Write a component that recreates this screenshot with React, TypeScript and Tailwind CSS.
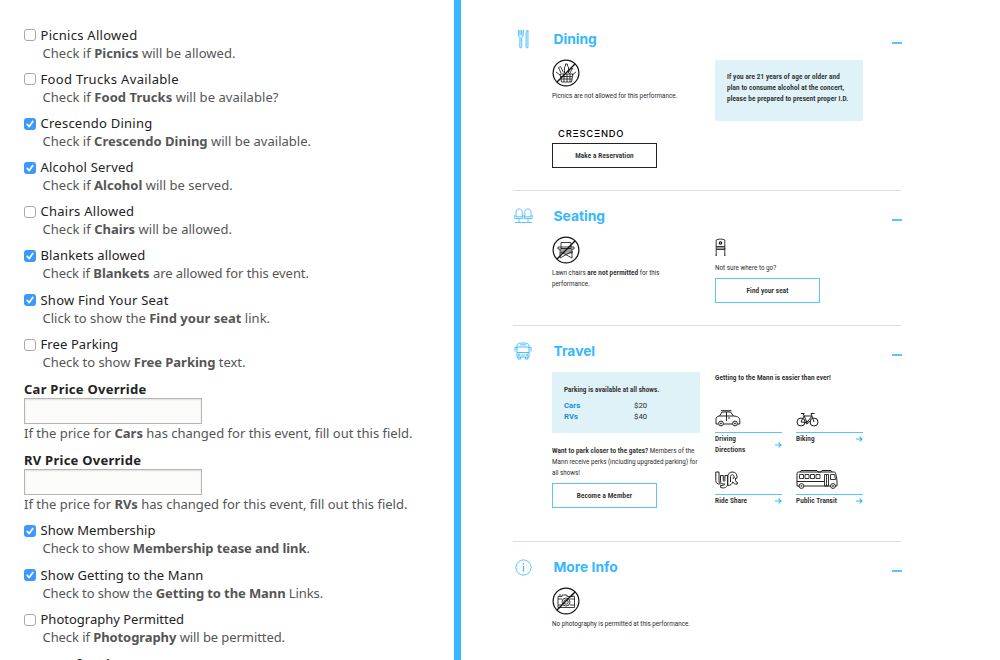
import React from "react";

type FieldProps = { checked?: boolean; label: string; tl: string; td: string; children: React.ReactNode };

function Check({ checked }: { checked?: boolean }) {
  return checked ? (
    <span className="flex h-3 w-3 shrink-0 items-center justify-center rounded-[3px] bg-[#3b99fc]">
      <svg viewBox="0 0 12 12" className="h-3 w-3" fill="none" stroke="#fff" strokeWidth="1.7" strokeLinecap="round" strokeLinejoin="round">
        <path d="M3.2 6.4 5.2 8.6 8.8 3.4" />
      </svg>
    </span>
  ) : (
    <span className="h-3 w-3 shrink-0 rounded-[3px] border border-[#a9a9a9] bg-white" />
  );
}

function Field({ checked, label, tl, td, children }: FieldProps) {
  return (
    <div className="h-[44.2px] shrink-0">
      <div className="flex h-[18px] items-center gap-[4.5px] text-[#222]">
        <Check checked={checked} />
        <span className={"whitespace-nowrap " + tl}>{label}</span>
      </div>
      <p className={"-mt-[0.8px] h-[18px] pl-[18.5px] leading-[18px] whitespace-nowrap text-[#555] " + td}>{children}</p>
    </div>
  );
}

function PriceField({ label, name }: { label: string; name: string }) {
  return (
    <div className="h-[71.2px] shrink-0">
      <div className="h-[18px] leading-[18px] font-bold tracking-[0.25px] text-[#222]">{label}</div>
      <div className="h-[26px] w-[178px] border border-[#b5b5b5] bg-[#fcfcfa] shadow-[inset_0_1px_2px_rgba(0,0,0,0.12)]" />
      <p className="h-[18px] leading-[18px] whitespace-nowrap text-[#555]">
        If the price for <b>{name}</b> has changed for this event, fill out this field.
      </p>
    </div>
  );
}

function Section({ icon, title, height, children }: { icon: React.ReactNode; title: string; height: string; children: React.ReactNode }) {
  return (
    <section className={"w-[388px] shrink-0 border-b border-[#dcdcdc] " + height}>
      <div className="flex h-[22px] items-center">
        <div className="flex w-[20px] items-center justify-center">{icon}</div>
        <h2 className="ml-[20.5px] flex-1 font-['Inter',sans-serif] text-[13.8px] leading-[22px] font-bold text-[#36b7ff]">{title}</h2>
        <span className="mt-[7px] mr-[-0.5px] h-[2px] w-[10px] bg-[#5cc3fb]" />
      </div>
      <div className="flex pl-[39px]">{children}</div>
    </section>
  );
}

function Arrow() {
  return (
    <svg viewBox="0 0 7 6" className="h-[6px] w-[7px]" fill="none" stroke="#36b7ff" strokeWidth="1.1">
      <path d="M0 3h6M3.6.6 6.1 3 3.6 5.4" />
    </svg>
  );
}

function LinkTile({ icon, children }: { icon: React.ReactNode; children: React.ReactNode }) {
  return (
    <div className="w-[67px]">
      <div className="flex h-[21px] items-end pb-[5px]">{icon}</div>
      <div className="flex items-center justify-between border-t border-[#5cc3fb] pt-[0.5px] font-bold tracking-[0.15px]">
        <span>{children}</span>
        <Arrow />
      </div>
    </div>
  );
}

function Banned({ children }: { children: React.ReactNode }) {
  return (
    <svg viewBox="0 0 28 28" className="h-[28px] w-[28px]" fill="none" stroke="#111" strokeWidth="0.8">
      {children}
      <circle cx="14" cy="14" r="12.9" strokeWidth="1.2" />
      <path d="M4.8 23.2 23.2 4.8" strokeWidth="1.3" />
    </svg>
  );
}

const diningIcon = (
  <svg viewBox="0 0 14 20" className="h-[20px] w-[14px]" fill="#d9f1ff" stroke="#36b7ff" strokeWidth="0.8">
    <path d="M2.4 1v5c0 1.6 1 2.2 1.6 2.6L3.7 18c0 1.2 2.2 1.2 2.2 0L5.6 8.6C6.4 8.200 7.300 7.600 7.300 6V1M4 1v5M5.700 1v5M10 11V5c0-2 .8-4 2-4v17c0 1.200-2 1.200-2 0z" />
  </svg>
);
const seatIcon = (
  <svg viewBox="0 0 19 16" className="h-[16px] w-[19px]" fill="none" stroke="#36b7ff" strokeWidth="0.8">
    <path d="M2 8.800V4.500C2 2 3 1 5.100 1s3.100 1 3.100 3.500v4.300zM10.800 8.800V4.500C10.800 2 11.800 1 13.900 1S17 2 17 4.500v4.300zM.8 7v3.500h8V7M10.200 7v3.500h8V7M5 10.500v4M14 10.500v4M1 14.500h17" />
  </svg>
);
const busIcon = (
  <svg viewBox="0 0 18 18" className="h-[18px] w-[18px]" fill="none" stroke="#36b7ff" strokeWidth="0.9">
    <path d="M3 15V3.500C3 2 5 1 9 1s6 1 6 2.500V15zM3 10.500h12M3 5h12M6 2.900h6M3 5.500H1v4M15 5.500h2v4M4 15v2h2.500v-2M11.500 15v2H14v-2M7 13h4" />
    <circle cx="5" cy="12.700" r=".8" /><circle cx="13" cy="12.700" r=".8" />
  </svg>
);
const infoIcon = (
  <svg viewBox="0 0 17 17" className="h-[17px] w-[17px]" fill="none" stroke="#36b7ff" strokeWidth="0.8">
    <circle cx="8.500" cy="8.500" r="7.600" />
    <path d="M8.500 7v5.500" strokeWidth="1.200" /><path d="M8.500 4.300v1.400" strokeWidth="1.300" />
  </svg>
);
const carIcon = (
  <svg viewBox="0 0 26 17" className="h-[17px] w-[26px]" fill="none" stroke="#222" strokeWidth="1">
    <path d="M3.500 14H1V9.500C1 7.500 2 6.200 4.500 6L7 2h8.500l3 4C23 6.200 24.800 8 24.800 10.500V14h-2.500M8.500 14h9M4.500 6h14M11.500 2v9M6 .7h10.500M13 8h2" />
    <circle cx="6" cy="13.500" r="2.400" /><circle cx="20" cy="13.500" r="2.400" />
    <circle cx="6" cy="13.500" r=".6" /><circle cx="20" cy="13.500" r=".6" />
  </svg>
);
const bikeIcon = (
  <svg viewBox="0 0 23 15" className="h-[15px] w-[23px]" fill="none" stroke="#222" strokeWidth="1">
    <circle cx="5" cy="10" r="4" /><circle cx="18" cy="10" r="4" />
    <path d="M5 10 8 4h8l-5 6.500zM11 10.500 7 1.500M5 1.500h3.500M18 10l-3-8.500h3.500M13 9.500l2 .5" /><circle cx="11" cy="10.500" r="1.300" />
  </svg>
);
const lyftIcon = (
  <svg viewBox="0 0 24 18" className="h-[18px] w-[24px]" fill="none" stroke="#222" strokeWidth="1" strokeLinejoin="round">
    <path d="M.8 1H4v9c0 1.600.6 2.200 1.400 2.800C2.600 13.600.8 12.200.8 9.500z" />
    <path d="M5.500 4.500h2.800v4.800c0 1.400 1.600 1.400 1.600 0V4.500h2.800V12c0 4-3 5.800-7 4.500v-2.400c2.200.8 3.700.4 4-1.300-2.500.8-4.200-.5-4.200-2.900z" />
    <path d="M12.700 14.500V6c0-3 1.700-5 4.600-5s4.700 2 4.700 4.800v1.400h-1.500v2.300c0 1 .5 1.500 1.700 1.500v2.200c-2.400 0-3.800-.6-4.500-2.400-.5 2.200-2 3.500-5 3.700M15.500 11V5.600c0-2.400 3.600-2.400 3.600 0v1.600h-1.500" />
  </svg>
);
const transitIcon = (
  <svg viewBox="0 0 42 20" className="h-[20px] w-[42px]" fill="none" stroke="#222" strokeWidth="1">
    <path d="M3 17H1V4.500C1 3.500 1.500 3 2.500 3H38c1 0 1.500.5 1.700 1.500L41 11v6h-2M8 17h27M4 3l1-1.500h16l1 1.500h3l1-1.500h9l1 1.500M1 12.500h27" />
    <path d="M3.500 5.500h4v4h-4zM9 5.500h4v4H9zM14.500 5.500h4v4h-4zM20 5.500h4v4h-4zM28.500 5.500h4V17h-4zM30.500 5.500V17M34.500 5.500h4l1 5h-5z" strokeWidth="0.9" />
    <circle cx="5.500" cy="17" r="2.400" fill="#fff" /><circle cx="37" cy="17" r="2.400" fill="#fff" /><circle cx="5.500" cy="17" r=".5" /><circle cx="37" cy="17" r=".5" />
  </svg>
);
const findSeatIcon = (
  <svg viewBox="0 0 11 18" className="h-[18px] w-[11px]" fill="none" stroke="#222" strokeWidth="0.9">
    <path d="M1.200 17.500V2C3 .8 8 .8 9.800 2v15.500M1.200 8.500h8.600M1.200 10h8.600v1.500H1.200M.5 17.200H2M9 17.200h1.500" />
    <circle cx="5.500" cy="5" r="1.200" strokeWidth="1.200" />
  </svg>
);

export default function App() {
  return (
    <div className="flex h-[660px] w-[1000px] overflow-hidden bg-white">
      <div className="flex w-[454px] shrink-0 flex-col overflow-hidden pt-[26.3px] pl-[24px] font-['Noto_Sans','Open_Sans',sans-serif] text-[13px]">
        <Field label="Picnics Allowed" tl="tracking-[0.27px]" td="tracking-[0.03px]">Check if <b>Picnics</b> will be allowed.</Field>
        <Field label="Food Trucks Available" tl="tracking-[0.33px]" td="tracking-[0.05px]">Check if <b>Food Trucks</b> will be available?</Field>
        <Field checked label="Crescendo Dining" tl="tracking-[0.25px]" td="tracking-[0.02px]">Check if <b>Crescendo Dining</b> will be available.</Field>
        <Field checked label="Alcohol Served" tl="tracking-[0.22px]" td="tracking-[0.02px]">Check if <b>Alcohol</b> will be served.</Field>
        <Field label="Chairs Allowed" tl="tracking-[0.27px]" td="tracking-[0.03px]">Check if <b>Chairs</b> will be allowed.</Field>
        <Field checked label="Blankets allowed" tl="tracking-[0.13px]" td="tracking-[-0.06px]">Check if <b>Blankets</b> are allowed for this event.</Field>
        <Field checked label="Show Find Your Seat" tl="tracking-[0.23px]" td="tracking-[0.02px]">Click to show the <b>Find your seat</b> link.</Field>
        <Field label="Free Parking" tl="tracking-[0.1px]" td="tracking-[-0.02px]">Check to show <b>Free Parking</b> text.</Field>
        <PriceField label="Car Price Override" name="Cars" />
        <PriceField label="RV Price Override" name="RVs" />
        <Field checked label="Show Membership" tl="tracking-[0.07px]" td="tracking-[-0.09px]">Check to show <b>Membership tease and link</b>.</Field>
        <Field checked label="Show Getting to the Mann" tl="tracking-[0.13px]" td="tracking-[-0.1px]">Check to show the <b>Getting to the Mann</b> Links.</Field>
        <Field label="Photography Permitted" tl="tracking-[0px]" td="tracking-[-0.08px]">Check if <b>Photography</b> will be permitted.</Field>
        <div className="h-[18px] shrink-0 pt-[0.6px] leading-[18px] font-bold tracking-[0.25px] text-[#222]">Name of Artist</div>
      </div>
      <div className="w-[7px] shrink-0 bg-[#36b7ff]" />
      <main className="flex flex-1 flex-col pt-[28px] pl-[52px] font-['Roboto','Inter',sans-serif] text-[6.3px] leading-[11px] text-[#2b2b2b]">
        <Section icon={diningIcon} title="Dining" height="h-[163px]">
          <div className="w-[163px] pt-[9px]">
            <Banned>
              <path d="M8 15h13l-1.500 8h-10zM8.500 17.500h12M9 20h11M12 15v8M15 15v8M18 15v8M4 13l4 3M24 13l-4 3M9 14 6.500 8.500l2-1 3 6M12.500 14V8l1-1V5h2v2l1 1v6M17 13c0-3 2-4 4-3M17.500 15l3-6" />
            </Banned>
            <p className="mt-[4px]">Picnics are not allowed for this performance.</p>
            <p className="mt-[27px] ml-[6px] font-['Inter',sans-serif] text-[9.4px] leading-[10px] font-medium tracking-[0.75px] text-black">CRΞSCΞNDO</p>
            <div className="mt-[4px] flex h-[25px] w-[105px] items-center justify-center border border-[#222] pt-[1px] font-bold tracking-[0.15px]">Make a Reservation</div>
          </div>
          <div className="mt-[10px] h-[61px] w-[148px] bg-[#def2f8] pt-[12px] pl-[12px] font-bold tracking-[0.15px] whitespace-nowrap">
            If you are 21 years of age or older and<br />plan to consume alcohol at the concert,<br />please be prepared to present proper I.D.
          </div>
        </Section>
        <Section icon={seatIcon} title="Seating" height="mt-[14px] h-[121px]">
          <div className="w-[163px] pt-[9px]">
            <Banned>
              <path d="M9 6.500h10v6H9zM6 11h16v2H6zM8 13v9M20 13v9M8 15h12v2H8M8 22l11-6M20 22 9 16" />
            </Banned>
            <p className="mt-[4px]">Lawn chairs <b className="tracking-[0.12px]">are not permitted</b> for this<br />performance.</p>
          </div>
          <div className="pt-[11px]">
            {findSeatIcon}
            <p className="mt-[7px]">Not sure where to go?</p>
            <div className="mt-[4px] flex h-[25px] w-[105px] items-center justify-center border border-[#5cc3fb] pt-[1px] font-bold tracking-[0.15px]">Find your seat</div>
          </div>
        </Section>
        <Section icon={busIcon} title="Travel" height="mt-[14px] h-[202px]">
          <div className="w-[163px] pt-[10px]">
            <div className="h-[61px] w-[148px] bg-[#def2f8] pt-[13px] pl-[12px]">
              <p className="font-bold tracking-[0.1px]">Parking is available at all shows.</p>
              <div className="mt-[4px] grid grid-cols-[70px_1fr] text-[7.800px] leading-[11px]">
                <b className="text-[#1c8fd0]">Cars</b><span>$20</span>
                <b className="text-[#1c8fd0]">RVs</b><span>$40</span>
              </div>
            </div>
            <p className="mt-[13px] whitespace-nowrap"><b className="tracking-[0.1px]">Want to park closer to the gates?</b> Members of the<br />Mann receive perks (including upgraded parking) for<br />all shows!</p>
            <div className="mt-[4px] flex h-[25px] w-[105px] items-center justify-center border border-[#5cc3fb] pt-[1px] font-bold tracking-[0.15px]">Become a Member</div>
          </div>
          <div className="pt-[11px]">
            <p className="font-bold tracking-[0.12px]">Getting to the Mann is easier than ever!</p>
            <div className="mt-[27px] grid grid-cols-[67px_67px] gap-x-[14px] gap-y-[17.5px]">
              <LinkTile icon={carIcon}>Driving<br />Directions</LinkTile>
              <LinkTile icon={bikeIcon}>Biking</LinkTile>
              <LinkTile icon={lyftIcon}>Ride Share</LinkTile>
              <LinkTile icon={transitIcon}>Public Transit</LinkTile>
            </div>
          </div>
        </Section>
        <Section icon={infoIcon} title="More Info" height="mt-[14px] h-[110px] border-b-0">
          <div className="pt-[9px]">
            <Banned>
              <path d="M6 9.500h4V8h5v1.500h7.500v11H6zM6 12h4M18 12h4.500M6 18h4M18 18h4.500M19 8h2.500M7 8h2" />
              <circle cx="14" cy="15" r="4" /><circle cx="14" cy="15" r="2.200" />
            </Banned>
            <p className="mt-[4px]">No photography is permitted at this performance.</p>
          </div>
        </Section>
      </main>
    </div>
  );
}
